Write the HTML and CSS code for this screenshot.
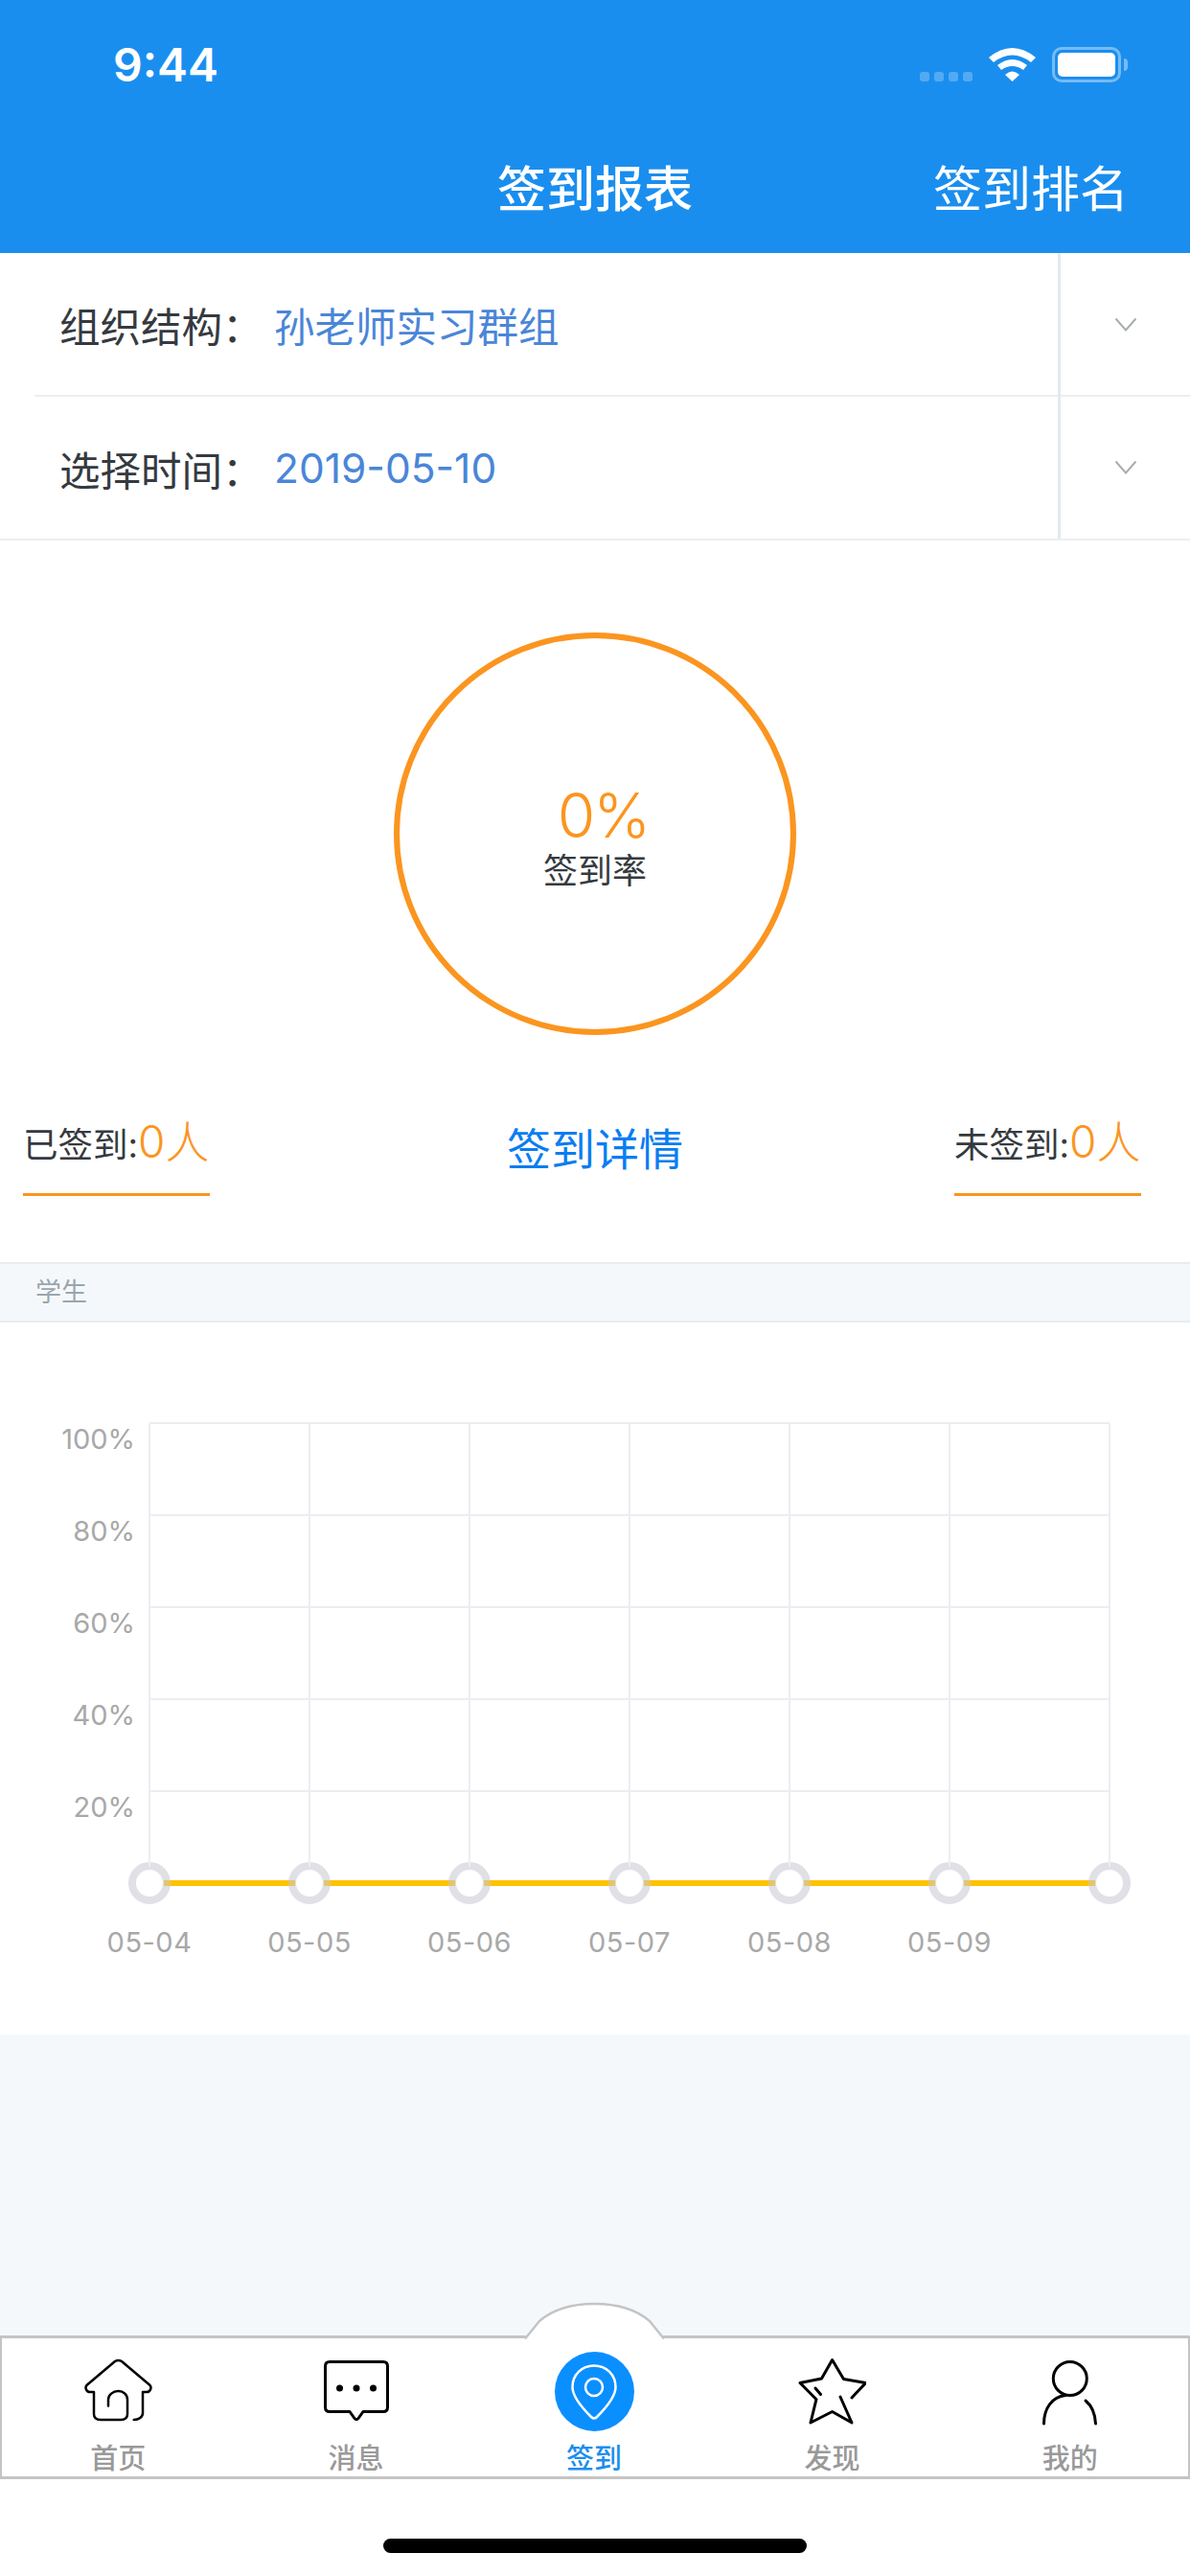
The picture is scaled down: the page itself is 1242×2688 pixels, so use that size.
FILE: index.html
```html
<!DOCTYPE html>
<html lang="zh">

<head>
    <meta charset="UTF-8">
    <meta name="viewport" content="width=device-width, initial-scale=1.0">
    <title>签到报表</title>
    <link rel="stylesheet" href="styles.css">
</head>

<body>
    <div class="page">
        <header class="header">
            <div class="status-bar">
                <span class="time">9:44</span>
                <div class="status-icons">
                    <div class="signal"><i></i><i></i><i></i><i></i></div>
                    <svg class="wifi" width="49" height="36" viewBox="0 0 49 36">
                        <path d="M0 10Q24.5 -10 49 10L44 15Q24.5 0 5 15Z" fill="#fff" />
                        <path d="M9 18Q24.5 6 40 18L36 23Q24.5 15 13 23Z" fill="#fff" />
                        <path d="M17 28Q24.5 21 32 28L24.5 35Z" fill="#fff" />
                    </svg>
                    <div class="battery"><div class="battery-level"></div></div>
                    <div class="battery-cap"></div>
                </div>
            </div>
            <div class="nav-bar">
                <h1 class="nav-title">签到报表</h1>
                <a class="nav-link">签到排名</a>
            </div>
        </header>

        <section class="filters">
            <div class="filter-row">
                <div class="filter-main">
                    <span class="filter-label">组织结构：</span>
                    <span class="filter-value">孙老师实习群组</span>
                </div>
                <div class="filter-arrow">
                    <svg width="24" height="16" viewBox="0 0 24 16"><path d="M1.500 1.500L12 13.500L22.500 1.500" fill="none" stroke="#a9adb0" stroke-width="2" /></svg>
                </div>
            </div>
            <div class="filter-row">
                <div class="filter-main">
                    <span class="filter-label">选择时间：</span>
                    <span class="filter-value">2019-05-10</span>
                </div>
                <div class="filter-arrow">
                    <svg width="24" height="16" viewBox="0 0 24 16"><path d="M1.500 1.500L12 13.500L22.500 1.500" fill="none" stroke="#a9adb0" stroke-width="2" /></svg>
                </div>
            </div>
        </section>

        <section class="rate">
            <div class="rate-circle">
                <span class="rate-num">0%</span>
                <span class="rate-label">签到率</span>
            </div>
        </section>

        <section class="summary">
            <div class="summary-item">已签到:<b>0人</b></div>
            <a class="summary-link">签到详情</a>
            <div class="summary-item summary-right">未签到:<b>0人</b></div>
        </section>

        <div class="group-title">学生</div>

        <section class="chart">
            <svg class="chart-svg" width="1242" height="640" viewBox="0 0 1242 640">
                <path class="line" d="M171 540H308M338 540H475M505 540H642M672 540H809M839 540H976M1006 540H1143" />
                <g class="dots">
                    <circle cx="156" cy="540" r="18" />
                    <circle cx="323" cy="540" r="18" />
                    <circle cx="490" cy="540" r="18" />
                    <circle cx="657" cy="540" r="18" />
                    <circle cx="824" cy="540" r="18" />
                    <circle cx="991" cy="540" r="18" />
                    <circle cx="1158" cy="540" r="18" />
                </g>
                <path class="line-over" d="M171 540H178M301 540H308M338 540H345M468 540H475M505 540H512M635 540H642M672 540H679M802 540H809M839 540H846M969 540H976M1006 540H1013M1136 540H1143" />
                <g class="grid">
                    <path d="M156 60V523M323 60V523M490 60V523M657 60V523M824 60V523M991 60V523M1158 60V523" />
                    <path d="M156 60H1158M156 156H1158M156 252H1158M156 348H1158M156 444H1158" />
                </g>
                <g class="y-labels">
                    <text x="141" y="87">100%</text>
                    <text x="141" y="183">80%</text>
                    <text x="141" y="279">60%</text>
                    <text x="141" y="375">40%</text>
                    <text x="141" y="471">20%</text>
                </g>
                <g class="x-labels">
                    <text x="156" y="612">05-04</text>
                    <text x="323" y="612">05-05</text>
                    <text x="490" y="612">05-06</text>
                    <text x="657" y="612">05-07</text>
                    <text x="824" y="612">05-08</text>
                    <text x="991" y="612">05-09</text>
                </g>
            </svg>
        </section>

        <div class="spacer"></div>

        <nav class="tabbar">
            <svg class="tab-bump" width="150" height="40" viewBox="0 0 150 40">
                <path d="M2 38.500L17 20C32 7 52 2 74.500 2C97 2 117 7 132 20L147 38.500" fill="#fff" stroke="#c4c4c4" stroke-width="2.500" />
            </svg>
            <div class="tabs">
                <a class="tab">
                    <svg class="tab-icon" width="72" height="72" viewBox="-2 -3 72 72">
                        <path d="M50.700 62C56 62 60 59 60 55V33H64C68 33 70 28 67 25.500L38 1C36 -0.200 33 -0.200 31 1L2 25.500C-1 28 1 33 5 33H9V56C9 60 12 62 16 62H37C41 62 44 60 44 56V41C44 36 40 32 34.500 32C29 32 24 36 24 41V47.500" fill="none" stroke="#000" stroke-width="2.500" stroke-linecap="round" stroke-linejoin="round" />
                    </svg>
                    <span>首页</span>
                </a>
                <a class="tab">
                    <svg class="tab-icon" width="72" height="72" viewBox="-2 -3 72 72">
                        <path d="M6 1.500H62C65 1.500 66.500 3 66.500 6V49C66.500 52 65 53.500 62 53.500H41L36 60.500C35 62 33 62 32 60.500L27 53.500H6C3 53.500 1.500 52 1.500 49V6C1.500 3 3 1.500 6 1.500Z" fill="none" stroke="#000" stroke-width="3" stroke-linejoin="round" />
                        <circle cx="16.500" cy="29" r="3.500" />
                        <circle cx="34" cy="29" r="3.500" />
                        <circle cx="51.500" cy="29" r="3.500" />
                    </svg>
                    <span>消息</span>
                </a>
                <a class="tab tab-active">
                    <div class="tab-pin">
                        <svg width="48" height="58" viewBox="0 0 48 58">
                            <path d="M24 1.500C11 1.500 1.500 11 1.500 24C1.500 34 12 46 21 55C23 57 25 57 27 55C36 46 46.500 34 46.500 24C46.500 11 37 1.500 24 1.500Z" fill="none" stroke="#fff" stroke-width="2.500" />
                            <circle cx="24" cy="24" r="9" fill="none" stroke="#fff" stroke-width="2.500" />
                        </svg>
                    </div>
                    <span>签到</span>
                </a>
                <a class="tab">
                    <svg class="tab-icon" width="72" height="72" viewBox="-2 -2 72 72">
                        <path d="M55 40L69.500 24.500L46.500 20.500L34.600 0.500L23.500 20L1 24.500L18 41.700L12 66L34.600 54.500L55 66L43 39" fill="none" stroke="#000" stroke-width="3" stroke-linecap="round" stroke-linejoin="round" />
                        <path d="M17 30L22.500 36.500" fill="none" stroke="#000" stroke-width="3" stroke-linecap="round" />
                    </svg>
                    <span>发现</span>
                </a>
                <a class="tab">
                    <svg class="tab-icon" width="72" height="72" viewBox="-7 -3 72 72">
                        <circle cx="28.800" cy="19" r="17.500" fill="none" stroke="#000" stroke-width="3" />
                        <path d="M1.500 66C1.500 50 10 38 24 36.500M45 42C51 47 55 56 55.500 66" fill="none" stroke="#000" stroke-width="3" stroke-linecap="round" />
                    </svg>
                    <span>我的</span>
                </a>
            </div>
        </nav>

        <div class="home-area">
            <div class="home-bar"></div>
        </div>
    </div>
</body>

</html>
```

FILE: styles.css
```css
* {
    margin: 0;
    padding: 0;
    box-sizing: border-box;
}

body {
    font-family: Inter, "Noto Sans CJK SC", sans-serif;
    color: #353a40;
    background: #fff;
}

.page {
    width: 1242px;
    height: 2688px;
    display: flex;
    flex-direction: column;
    overflow: hidden;
}

.header {
    height: 264px;
    background: #1a8eef;
    color: #fff;
    flex-shrink: 0;
}

.status-bar {
    height: 132px;
    display: flex;
    justify-content: space-between;
    padding: 0 65px 0 118px;
    align-items: flex-start;
}

.time {
    font-size: 48px;
    font-weight: 600;
    line-height: 48px;
    margin-top: 44px;
}

.status-icons {
    display: flex;
    align-items: flex-start;
    margin-top: 49px;
}

.signal {
    display: flex;
    gap: 5px;
    margin: 26px 17px 0 0;
}

.signal i {
    width: 10px;
    height: 10px;
    border-radius: 3px;
    background: rgba(255, 255, 255, 0.25);
}

.wifi {
    margin: 1px 17px 0 0;
}

.battery {
    width: 72px;
    height: 37px;
    border: 3px solid rgba(255, 255, 255, 0.4);
    border-radius: 10px;
    padding: 3px;
}

.battery-level {
    height: 100%;
    background: #fff;
    border-radius: 5px;
}

.battery-cap {
    width: 4px;
    height: 13px;
    margin: 12px 0 0 3px;
    background: rgba(255, 255, 255, 0.4);
    border-radius: 0 4px 4px 0;
}

.nav-bar {
    height: 132px;
    display: grid;
    grid-template-columns: 1fr auto 1fr;
    padding-top: 33px;
}

.nav-title {
    grid-column: 2;
    font-size: 51px;
    font-weight: 500;
    line-height: 66px;
}

.nav-link {
    justify-self: end;
    margin-right: 64px;
    font-size: 51px;
    line-height: 66px;
}

.filter-row {
    height: 150px;
    display: flex;
}

.filter-row:last-child {
    border-bottom: 2px solid #eceef0;
}

.filter-main {
    flex: 1;
    display: flex;
    align-items: center;
    margin-left: 36px;
    padding-left: 26px;
    font-size: 42.5px;
    border-bottom: 2px solid #eceef0;
}

.filter-row:last-child .filter-main {
    margin-left: 0;
    padding-left: 62px;
    border-bottom: 0;
}

.filter-label {
    width: 224px;
}

.filter-value {
    color: #4a86d8;
}

.filter-arrow {
    width: 138px;
    border-left: 3px solid #e2e9ee;
    display: flex;
    align-items: center;
    justify-content: center;
    box-shadow: inset 0 -2px 0 #eceef0;
}

.filter-row:last-child .filter-arrow {
    box-shadow: none;
}

.rate {
    height: 564px;
    display: flex;
    justify-content: center;
    padding-top: 96px;
}

.rate-circle {
    width: 420px;
    height: 420px;
    border: 6px solid #fb951f;
    border-radius: 50%;
    display: flex;
    flex-direction: column;
    align-items: center;
    padding-top: 149px;
}

.rate-num {
    font-size: 64px;
    font-weight: 350;
    line-height: 72px;
    letter-spacing: -2px;
    margin-left: 17px;
    color: #fb951f;
}

.rate-label {
    font-size: 36px;
    line-height: 44px;
    color: #353a40;
}

.summary {
    height: 189px;
    display: grid;
    grid-template-columns: 1fr auto 1fr;
}

.summary-item {
    justify-self: start;
    width: 195px;
    height: 92px;
    margin: 28px 0 0 24px;
    border-bottom: 3px solid #fb951f;
    font-size: 36.5px;
    line-height: 70px;
    white-space: nowrap;
}

.summary-item.summary-right {
    justify-self: end;
    margin: 28px 51px 0 0;
}

.summary-item b {
    font-weight: 300;
    font-size: 46px;
    color: #fb951f;
}

.summary-link {
    font-size: 46px;
    line-height: 66px;
    margin-top: 38px;
    color: #0a7df2;
}

.group-title {
    height: 63px;
    background: #f5f8fa;
    border-top: 2px solid #e8ecef;
    border-bottom: 2px solid #e8ecef;
    padding-left: 37px;
    font-size: 27px;
    line-height: 59px;
    color: #9aa6ae;
}

.chart {
    height: 743px;
    padding-top: 45px;
    background: #fff;
    flex-shrink: 0;
}

.chart-svg {
    display: block;
}

.grid path {
    fill: none;
    stroke: #ecedf2;
    stroke-width: 2;
}

.y-labels text {
    font-size: 29px;
    fill: #a8a8a8;
    text-anchor: end;
}

.x-labels text {
    font-size: 29px;
    letter-spacing: 0.5px;
    fill: #a8a8a8;
    text-anchor: middle;
}

.line {
    fill: none;
    stroke: #fdc300;
    stroke-width: 6;
}

.line-over {
    fill: none;
    stroke: #e4c56a;
    stroke-width: 6;
}

.dots circle {
    fill: none;
    stroke: #e0e0e6;
    stroke-width: 8;
}

.spacer {
    flex: 1;
    background: #f5f8fb;
}

.tabbar {
    height: 150px;
    position: relative;
    background: #fff;
    border: 3px solid #c4c4c4;
    border-left-width: 2px;
    border-right-width: 2px;
    flex-shrink: 0;
}

.tab-bump {
    position: absolute;
    left: 544px;
    top: -38px;
}

.tabs {
    width: 1242px;
    margin-left: -3px;
    display: flex;
}

.tab {
    flex: 1;
    display: flex;
    flex-direction: column;
    align-items: center;
    font-size: 29px;
    font-weight: 500;
    color: #999;
    position: relative;
}

.tab-icon {
    margin-top: 20px;
}

.tab span {
    position: absolute;
    top: 109px;
    line-height: 34px;
}

.tab-active {
    color: #1a8eef;
}

.tab-pin {
    width: 83px;
    height: 83px;
    margin-top: 14px;
    border-radius: 50%;
    background: #0a8fff;
    display: flex;
    align-items: center;
    justify-content: center;
}

.home-area {
    height: 101px;
    flex-shrink: 0;
    display: flex;
    justify-content: center;
    padding-top: 62px;
}

.home-bar {
    width: 442px;
    height: 15px;
    border-radius: 8px;
    background: #000;
}
```
